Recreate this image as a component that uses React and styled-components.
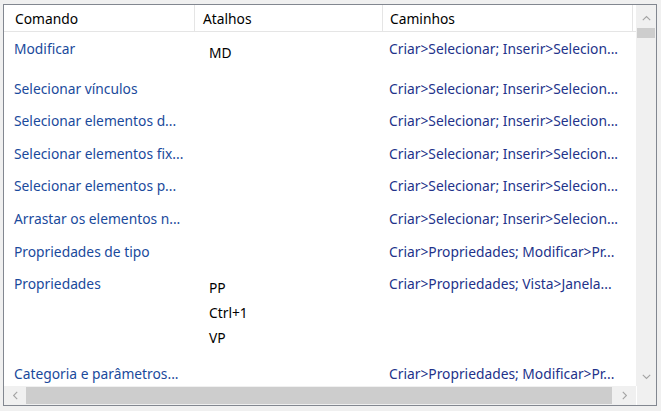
import React from "react"
import styled, { createGlobalStyle } from "styled-components"

const GlobalStyle = createGlobalStyle`
  html, body {
    margin: 0;
    padding: 0;
    background: #f0f0f0;
  }
  body {
    font-family: "Noto Sans", "Segoe UI", sans-serif;
    font-size: 13.8px;
  }
`

const Window = styled.div`
  width: 661px;
  height: 411px;
  box-sizing: border-box;
  padding: 4px 4px 5px 3px;
  background: #f0f0f0;
`

const Frame = styled.div`
  height: 100%;
  box-sizing: border-box;
  border: 1px solid #828790;
  background: #fff;
  display: grid;
  grid-template-columns: 1fr 20px;
  grid-template-rows: 1fr 19px;
  overflow: hidden;
`

const List = styled.div`
  overflow: hidden;
  display: flex;
  flex-direction: column;
`

const Header = styled.div`
  display: grid;
  grid-template-columns: 191px 188px 250px;
  height: 26px;
  border-bottom: 1px solid #e5e5e5;
  flex-shrink: 0;
`

const HeaderCell = styled.div`
  display: flex;
  align-items: center;
  padding-left: ${p => p.$pad}px;
  border-right: 1px solid #e5e5e5;
  color: #000;
  line-height: 16px;
  padding-top: 1px;
`

const Row = styled.div`
  display: grid;
  grid-template-columns: 191px 188px 250px;
  min-height: 32.6px;
  flex-shrink: 0;
  padding-top: ${p => (p.$first ? 2 : 0)}px;
  padding-bottom: ${p => (p.$tall ? (p.$first ? 7 : 9) : 0)}px;
`

const Cell = styled.div`
  padding-top: 7px;
  padding-left: ${p => p.$pad}px;
  white-space: nowrap;
  overflow: hidden;
  line-height: 16px;
  color: ${p => p.$color};
`

const Shortcuts = styled.div`
  padding-top: 6px;
  padding-left: 14px;
  color: #000;
`

const Shortcut = styled.div`
  line-height: 25px;
`

const VScroll = styled.div`
  background: #f0f0f0;
  display: flex;
  flex-direction: column;
  align-items: stretch;
  padding-top: 3px;
`

const HScroll = styled.div`
  background: #f0f0f0;
  display: flex;
  align-items: stretch;
`

const Corner = styled.div`
  background: #f0f0f0;
  border-left: 1px solid #fff;
`

const Arrow = styled.div`
  display: flex;
  align-items: center;
  justify-content: center;
  flex-shrink: 0;
  width: ${p => p.$w || "auto"};
  height: ${p => p.$h || "auto"};
`

const VThumb = styled.div`
  height: 10px;
  margin: 0 1px;
  background: #cdcdcd;
`

const HThumb = styled.div`
  flex: 1;
  margin: 1px 0;
  background: #cdcdcd;
`

const Chevron = ({ dir }) => {
  const rot = { up: 0, right: 90, down: 180, left: 270 }[dir]
  return (
    <svg width="9" height="9" viewBox="0 0 9 9" style={{ transform: `rotate(${rot}deg)` }}>
      <path d="M0.8 6.2 L4.5 2.6 L8.2 6.2" fill="none" stroke="#a3a3a3" strokeWidth="1.1" />
    </svg>
  )
}

const BLUE = "#1a4a9c"
const NAVY = "#22328a"

const rows = [
  { cmd: "Modificar", keys: ["MD"], path: "Criar>Selecionar; Inserir>Selecion..." },
  { cmd: "Selecionar vínculos", keys: [], path: "Criar>Selecionar; Inserir>Selecion..." },
  { cmd: "Selecionar elementos d...", keys: [], path: "Criar>Selecionar; Inserir>Selecion..." },
  { cmd: "Selecionar elementos fix...", keys: [], path: "Criar>Selecionar; Inserir>Selecion..." },
  { cmd: "Selecionar elementos p...", keys: [], path: "Criar>Selecionar; Inserir>Selecion..." },
  { cmd: "Arrastar os elementos n...", keys: [], path: "Criar>Selecionar; Inserir>Selecion..." },
  { cmd: "Propriedades de tipo", keys: [], path: "Criar>Propriedades; Modificar>Pr..." },
  { cmd: "Propriedades", keys: ["PP", "Ctrl+1", "VP"], path: "Criar>Propriedades; Vista>Janela..." },
  { cmd: "Categoria e parâmetros...", keys: [], path: "Criar>Propriedades; Modificar>Pr..." },
]

export default function App() {
  return (
    <Window>
      <GlobalStyle />
      <Frame>
        <List>
          <Header>
            <HeaderCell $pad={11}>Comando</HeaderCell>
            <HeaderCell $pad={8}>Atalhos</HeaderCell>
            <HeaderCell $pad={7}>Caminhos</HeaderCell>
          </Header>
          {rows.map((r, i) => (
            <Row key={r.cmd} $tall={r.keys.length > 0} $first={i === 0}>
              <Cell $pad={10} $color={BLUE}>{r.cmd}</Cell>
              <Shortcuts>
                {r.keys.map(k => (
                  <Shortcut key={k}>{k}</Shortcut>
                ))}
              </Shortcuts>
              <Cell $pad={6} $color={NAVY}>{r.path}</Cell>
            </Row>
          ))}
        </List>
        <VScroll>
          <Arrow $h="20px">
            <Chevron dir="up" />
          </Arrow>
          <VThumb />
          <div style={{ flex: 1 }} />
          <Arrow $h="20px">
            <Chevron dir="down" />
          </Arrow>
        </VScroll>
        <HScroll>
          <Arrow $w="22px">
            <Chevron dir="left" />
          </Arrow>
          <HThumb />
          <Arrow $w="24px">
            <Chevron dir="right" />
          </Arrow>
        </HScroll>
        <Corner />
      </Frame>
    </Window>
  )
}
